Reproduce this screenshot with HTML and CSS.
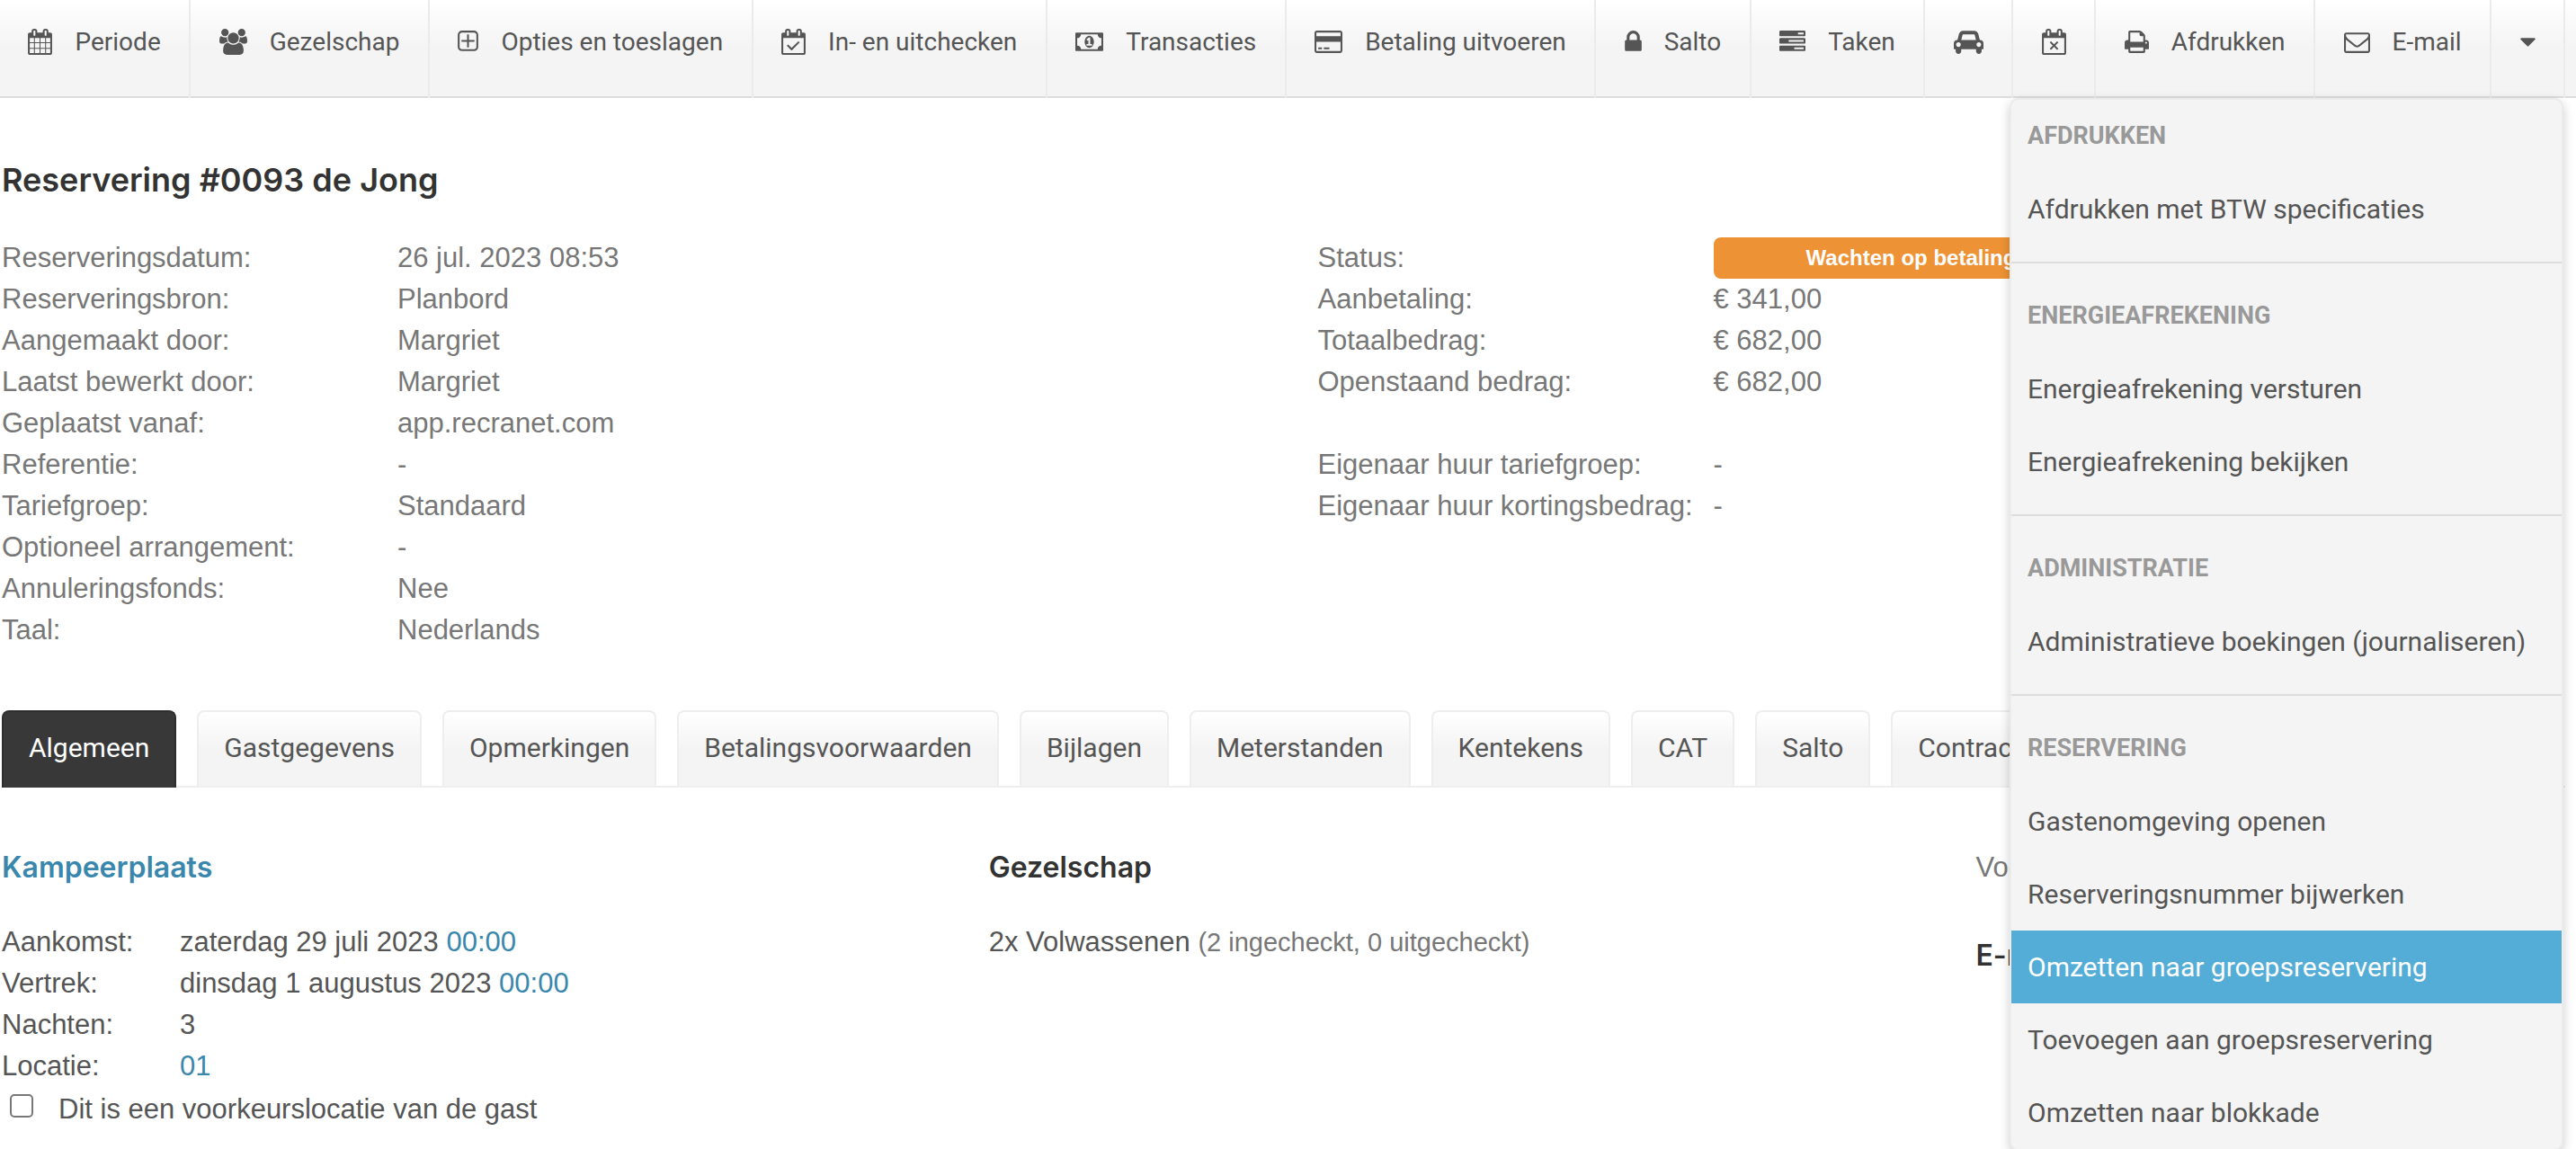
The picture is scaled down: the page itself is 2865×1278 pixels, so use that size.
FILE: index.html
```html
<!DOCTYPE html>
<html lang="nl">
<head>
<meta charset="utf-8">
<meta name="viewport" content="width=device-width, initial-scale=1">
<title>Reservering #0093 de Jong</title>
<link rel="stylesheet" href="styles.css">
</head>
<body>
<div class="page">
  <nav class="toolbar" aria-label="Acties">
    <button class="tool" type="button">
      <svg class="icon icon-calendar" viewBox="64 0 1664 1792" aria-hidden="true"><path d="M192 1664h288v-288h-288v288zm352 0h320v-288h-320v288zm-352-352h288v-320h-288v320zm352 0h320v-320h-320v320zm-352-384h288v-288h-288v288zm736 736h320v-288h-320v288zm-384-736h320v-288h-320v288zm768 736h288v-288h-288v288zm-384-352h320v-320h-320v320zm-352-864v-288q0-13-9.5-22.5t-22.5-9.5h-64q-13 0-22.5 9.5t-9.5 22.5v288q0 13 9.5 22.5t22.5 9.5h64q13 0 22.5-9.5t9.5-22.5zm736 864h288v-320h-288v320zm-384-384h320v-288h-320v288zm384 0h288v-288h-288v288zm32-480v-288q0-13-9.5-22.5t-22.5-9.5h-64q-13 0-22.5 9.5t-9.5 22.5v288q0 13 9.5 22.5t22.5 9.5h64q13 0 22.5-9.5t9.5-22.5zm384-64v1280q0 52-38 90t-90 38h-1408q-52 0-90-38t-38-90v-1280q0-52 38-90t90-38h128v-96q0-66 47-113t113-47h64q66 0 113 47t47 113v96h384v-96q0-66 47-113t113-47h64q66 0 113 47t47 113v96h128q52 0 90 38t38 90z"/></svg>
      <span>Periode</span>
    </button>
    <button class="tool" type="button">
      <svg class="icon icon-wide" viewBox="0 0 1920 1792" aria-hidden="true"><path d="M593 896q-162 5-265 128h-134q-82 0-138-40.5t-56-118.5q0-353 124-353 6 0 43.5 21t97.5 42.5 119 21.5q67 0 133-23-5 37-5 66 0 139 81 256zm1071 637q0 120-73 189.5t-194 69.5h-874q-121 0-194-69.5t-73-189.5q0-53 3.500-103.500t14-109 26.500-108.500 43-97.500 62-81 85.500-53.500 111.500-20q10 0 43 21.500t73 48 107 48 135 21.500 135-21.500 107-48 73-48 43-21.500q61 0 111.500 20t85.500 53.500 62 81 43 97.500 26.500 108.500 14 109 3.500 103.500zm-1024-1277q0 106-75 181t-181 75-181-75-75-181 75-181 181-75 181 75 75 181zm704 384q0 159-112.500 271.500t-271.500 112.500-271.500-112.500-112.500-271.500 112.500-271.500 271.500-112.500 271.500 112.500 112.500 271.500zm576 225q0 78-56 118.500t-138 40.500h-134q-103-123-265-128 81-117 81-256 0-29-5-66 66 23 133 23 59 0 119-21.500t97.500-42.500 43.500-21q124 0 124 353zm-128-609q0 106-75 181t-181 75-181-75-75-181 75-181 181-75 181 75 75 181z"/></svg>
      <span>Gezelschap</span>
    </button>
    <button class="tool" type="button">
      <svg class="icon icon-plus" viewBox="192 0 1408 1792" aria-hidden="true"><path d="M1344 800v64q0 14-9 23t-23 9h-352v352q0 14-9 23t-23 9h-64q-14 0-23-9t-9-23v-352h-352q-14 0-23-9t-9-23v-64q0-14 9-23t23-9h352v-352q0-14 9-23t23-9h64q14 0 23 9t9 23v352h352q14 0 23 9t9 23zm128 448v-832q0-66-47-113t-113-47h-832q-66 0-113 47t-47 113v832q0 66 47 113t113 47h832q66 0 113-47t47-113zm128-832v832q0 119-84.500 203.500t-203.500 84.500h-832q-119 0-203.500-84.500t-84.500-203.500v-832q0-119 84.500-203.500t203.500-84.500h832q119 0 203.500 84.500t84.500 203.500z"/></svg>
      <span>Opties en toeslagen</span>
    </button>
    <button class="tool" type="button">
      <svg class="icon icon-calendar" viewBox="64 0 1664 1792" aria-hidden="true"><path d="M1303 964l-512 512q-10 9-23 9t-23-9l-288-288q-9-10-9-23t9-22l46-46q9-9 22-9t23 9l220 220 444-444q10-9 23-9t22 9l46 46q9 9 9 22t-9 23zm-1111 700h1408v-1024h-1408v1024zm384-1216v-288q0-14-9-23t-23-9h-64q-14 0-23 9t-9 23v288q0 14 9 23t23 9h64q14 0 23-9t9-23zm768 0v-288q0-14-9-23t-23-9h-64q-14 0-23 9t-9 23v288q0 14 9 23t23 9h64q14 0 23-9t9-23zm384-64v1280q0 52-38 90t-90 38h-1408q-52 0-90-38t-38-90v-1280q0-52 38-90t90-38h128v-96q0-66 47-113t113-47h64q66 0 113 47t47 113v96h384v-96q0-66 47-113t113-47h64q66 0 113 47t47 113v96h128q52 0 90 38t38 90z"/></svg>
      <span>In- en uitchecken</span>
    </button>
    <button class="tool" type="button">
      <svg class="icon icon-wide" viewBox="0 0 1920 1792" aria-hidden="true"><path d="M768 1152h384v-96h-128v-448h-114l-148 137 77 80q42-37 55-57h2v288h-128v96zm512-256q0 70-21 142t-59.500 134-101.500 101-138 39-138-39-101.500-101-59.500-134-21-142 21-142 59.500-134 101.500-101 138-39 138 39 101.500 101 59.500 134 21 142zm512 256v-512q-106 0-181-75t-75-181h-1152q0 106-75 181t-181 75v512q106 0 181 75t75 181h1152q0-106 75-181t181-75zm128-832v1152q0 26-19 45t-45 19h-1792q-26 0-45-19t-19-45v-1152q0-26 19-45t45-19h1792q26 0 45 19t19 45z"/></svg>
      <span>Transacties</span>
    </button>
    <button class="tool" type="button">
      <svg class="icon icon-wide" viewBox="0 0 1920 1792" aria-hidden="true"><path d="M1760 128q66 0 113 47t47 113v1216q0 66-47 113t-113 47h-1600q-66 0-113-47t-47-113v-1216q0-66 47-113t113-47h1600zm-1600 128q-13 0-22.500 9.500t-9.500 22.500v224h1664v-224q0-13-9.500-22.500t-22.500-9.500h-1600zm1600 1280q13 0 22.500-9.500t9.500-22.500v-608h-1664v608q0 13 9.500 22.500t22.500 9.500h1600zm-1504-128v-128h256v128h-256zm384 0v-128h384v128h-384z"/></svg>
      <span>Betaling uitvoeren</span>
    </button>
    <button class="tool" type="button">
      <svg class="icon icon-lock" viewBox="320 0 1152 1792" aria-hidden="true"><path d="M640 768h512v-192q0-106-75-181t-181-75-181 75-75 181v192zm832 96v576q0 40-28 68t-68 28h-960q-40 0-68-28t-28-68v-576q0-40 28-68t68-28h32v-192q0-184 132-316t316-132 316 132 132 316v192h32q40 0 68 28t28 68z"/></svg>
      <span>Salto</span>
    </button>
    <button class="tool" type="button">
      <svg class="icon icon-tasks" viewBox="0 0 1792 1792" aria-hidden="true"><path d="M1024 1408h640v-128h-640v128zm-384-512h1024v-128h-1024v128zm640-512h384v-128h-384v128zm512 832v256q0 26-19 45t-45 19h-1664q-26 0-45-19t-19-45v-256q0-26 19-45t45-19h1664q26 0 45 19t19 45zm0-512v256q0 26-19 45t-45 19h-1664q-26 0-45-19t-19-45v-256q0-26 19-45t45-19h1664q26 0 45 19t19 45zm0-512v256q0 26-19 45t-45 19h-1664q-26 0-45-19t-19-45v-256q0-26 19-45t45-19h1664q26 0 45 19t19 45z"/></svg>
      <span>Taken</span>
    </button>
    <button class="tool" type="button" aria-label="Kenteken">
      <svg class="icon icon-car" viewBox="0 0 2048 1792" aria-hidden="true"><path d="M480 1088q0-66-47-113t-113-47-113 47-47 113 47 113 113 47 113-47 47-113zm36-320h1016l-89-357q-2-8-14-17.500t-21-9.500h-768q-9 0-21 9.500t-14 17.500zm1372 320q0-66-47-113t-113-47-113 47-47 113 47 113 113 47 113-47 47-113zm160-96v384q0 14-9 23t-23 9h-96v128q0 80-56 136t-136 56-136-56-56-136v-128h-1024v128q0 80-56 136t-136 56-136-56-56-136v-128h-96q-14 0-23-9t-9-23v-384q0-93 65.500-158.500t158.500-65.500h28l105-419q23-94 104-157.500t179-63.500h768q98 0 179 63.500t104 157.500l105 419h28q93 0 158.500 65.500t65.500 158.500z"/></svg>
    </button>
    <button class="tool" type="button" aria-label="Annuleren">
      <svg class="icon icon-calendar" viewBox="64 0 1664 1792" aria-hidden="true"><path d="M1175 1385l-46 46q-9 9-22 9t-23-9l-188-189-188 189q-10 9-23 9t-22-9l-46-46q-9-9-9-22t9-23l189-188-189-188q-9-10-9-23t9-22l46-46q9-9 22-9t23 9l188 188 188-188q10-9 23-9t22 9l46 46q9 9 9 22t-9 23l-188 188 188 188q9 10 9 23t-9 22zm-983 279h1408v-1024h-1408v1024zm384-1216v-288q0-14-9-23t-23-9h-64q-14 0-23 9t-9 23v288q0 14 9 23t23 9h64q14 0 23-9t9-23zm768 0v-288q0-14-9-23t-23-9h-64q-14 0-23 9t-9 23v288q0 14 9 23t23 9h64q14 0 23-9t9-23zm384-64v1280q0 52-38 90t-90 38h-1408q-52 0-90-38t-38-90v-1280q0-52 38-90t90-38h128v-96q0-66 47-113t113-47h64q66 0 113 47t47 113v96h384v-96q0-66 47-113t113-47h64q66 0 113 47t47 113v96h128q52 0 90 38t38 90z"/></svg>
    </button>
    <button class="tool" type="button">
      <svg class="icon icon-calendar" viewBox="64 0 1664 1792" aria-hidden="true"><path d="M448 1536h896v-256h-896v256zm0-640h896v-384h-160q-40 0-68-28t-28-68v-160h-640v640zm1152 64q0-26-19-45t-45-19-45 19-19 45 19 45 45 19 45-19 19-45zm128 0v416q0 13-9.500 22.500t-22.500 9.500h-224v160q0 40-28 68t-68 28h-960q-40 0-68-28t-28-68v-160h-224q-13 0-22.500-9.500t-9.500-22.500v-416q0-79 56.500-135.500t135.500-56.500h64v-544q0-40 28-68t68-28h672q40 0 88 20t76 48l152 152q28 28 48 76t20 88v256h64q79 0 135.500 56.500t56.500 135.500z"/></svg>
      <span>Afdrukken</span>
    </button>
    <button class="tool" type="button">
      <svg class="icon icon-tasks" viewBox="0 0 1792 1792" aria-hidden="true"><path d="M1664 1504v-768q-32 36-69 66-268 206-426 338-51 43-83 67t-86.500 48.500-102.500 24.500h-2q-48 0-102.500-24.500t-86.500-48.500-83-67q-158-132-426-338-37-30-69-66v768q0 13 9.500 22.500t22.500 9.500h1472q13 0 22.500-9.500t9.500-22.500zm0-1051v-24.500l-.5-13-3-12.500-5.500-9-9-7.500-14-2.500h-1472q-13 0-22.500 9.500t-9.500 22.500q0 168 147 284 193 152 401 317 6 5 35 29.500t46 37.500 44.500 31.500 50.500 27.500 43 9h2q20 0 43-9t50.500-27.500 44.500-31.500 46-37.500 35-29.500q208-165 401-317 54-43 100.500-115.500t46.500-131.500zm128-37v1088q0 66-47 113t-113 47h-1472q-66 0-113-47t-47-113v-1088q0-66 47-113t113-47h1472q66 0 113 47t47 113z"/></svg>
      <span>E-mail</span>
    </button>
    <button class="tool" type="button" aria-label="Meer acties" aria-expanded="true">
      <svg class="icon icon-caret" viewBox="384 0 1024 1792" aria-hidden="true"><path d="M1408 704q0 26-19 45l-448 448q-19 19-45 19t-45-19l-448-448q-19-19-19-45t19-45 45-19h896q26 0 45 19t19 45z"/></svg>
    </button>

    <div class="menu">
      <section class="menu-group">
        <h2 class="menu-title">AFDRUKKEN</h2>
        <a class="menu-item" href="#">Afdrukken met BTW specificaties</a>
      </section>
      <section class="menu-group">
        <h2 class="menu-title">ENERGIEAFREKENING</h2>
        <a class="menu-item" href="#">Energieafrekening versturen</a>
        <a class="menu-item" href="#">Energieafrekening bekijken</a>
      </section>
      <section class="menu-group">
        <h2 class="menu-title">ADMINISTRATIE</h2>
        <a class="menu-item" href="#">Administratieve boekingen (journaliseren)</a>
      </section>
      <section class="menu-group">
        <h2 class="menu-title">RESERVERING</h2>
        <a class="menu-item" href="#">Gastenomgeving openen</a>
        <a class="menu-item" href="#">Reserveringsnummer bijwerken</a>
        <a class="menu-item menu-item-active" href="#">Omzetten naar groepsreservering</a>
        <a class="menu-item" href="#">Toevoegen aan groepsreservering</a>
        <a class="menu-item" href="#">Omzetten naar blokkade</a>
      </section>
    </div>
  </nav>

  <main class="content">
    <h1 class="title">Reservering #0093 de Jong</h1>

    <div class="summary">
      <dl class="facts">
        <dt>Reserveringsdatum:</dt><dd>26 jul. 2023 08:53</dd>
        <dt>Reserveringsbron:</dt><dd>Planbord</dd>
        <dt>Aangemaakt door:</dt><dd>Margriet</dd>
        <dt>Laatst bewerkt door:</dt><dd>Margriet</dd>
        <dt>Geplaatst vanaf:</dt><dd>app.recranet.com</dd>
        <dt>Referentie:</dt><dd>-</dd>
        <dt>Tariefgroep:</dt><dd>Standaard</dd>
        <dt>Optioneel arrangement:</dt><dd>-</dd>
        <dt>Annuleringsfonds:</dt><dd>Nee</dd>
        <dt>Taal:</dt><dd>Nederlands</dd>
      </dl>
      <div>
        <dl class="facts">
          <dt>Status:</dt><dd><span class="badge">Wachten op betaling</span></dd>
          <dt>Aanbetaling:</dt><dd>€ 341,00</dd>
          <dt>Totaalbedrag:</dt><dd>€ 682,00</dd>
          <dt>Openstaand bedrag:</dt><dd>€ 682,00</dd>
        </dl>
        <dl class="facts facts-owner">
          <dt>Eigenaar huur tariefgroep:</dt><dd>-</dd>
          <dt>Eigenaar huur kortingsbedrag:</dt><dd>-</dd>
        </dl>
      </div>
    </div>

    <div class="tabs">
      <a class="tab tab-active" href="#">Algemeen</a>
      <a class="tab" href="#">Gastgegevens</a>
      <a class="tab" href="#">Opmerkingen</a>
      <a class="tab" href="#">Betalingsvoorwaarden</a>
      <a class="tab" href="#">Bijlagen</a>
      <a class="tab" href="#">Meterstanden</a>
      <a class="tab" href="#">Kentekens</a>
      <a class="tab" href="#">CAT</a>
      <a class="tab" href="#">Salto</a>
      <a class="tab" href="#">Contract</a>
    </div>

    <div class="details">
      <section>
        <h2 class="heading"><a href="#">Kampeerplaats</a></h2>
        <dl class="stay">
          <dt>Aankomst:</dt><dd>zaterdag 29 juli 2023 <a href="#">00:00</a></dd>
          <dt>Vertrek:</dt><dd>dinsdag 1 augustus 2023 <a href="#">00:00</a></dd>
          <dt>Nachten:</dt><dd>3</dd>
          <dt>Locatie:</dt><dd><a href="#">01</a></dd>
        </dl>
        <label class="check"><input type="checkbox"><span>Dit is een voorkeurslocatie van de gast</span></label>
      </section>
      <section>
        <h2 class="heading">Gezelschap</h2>
        <p class="party">2x Volwassenen <small>(2 ingecheckt, 0 uitgecheckt)</small></p>
      </section>
      <section>
        <p class="note">Voeg toe</p>
        <h2 class="heading">E-mail</h2>
      </section>
    </div>
  </main>
</div>
</body>
</html>
```
FILE: styles.css
```css
* {
  box-sizing: border-box;
}

body {
  margin: 0;
  background: #fff;
  color: #555;
  font: 31px/46px "Liberation Sans", Arial, sans-serif;
}

h1, h2, p, dl, dd {
  margin: 0;
}

a {
  color: #3a87ad;
  text-decoration: none;
}

.page {
  min-height: 100vh;
  overflow: clip;
}

/* Toolbar */

.toolbar {
  position: relative;
  display: flex;
  height: 109px;
  padding-right: 12px;
  background: linear-gradient(#fff, #f4f4f4 50%) padding-box;
  border-bottom: 2px solid #ddd;
}

.tool {
  display: flex;
  flex: 1 1 auto;
  align-items: center;
  justify-content: center;
  gap: 25px;
  margin: 0 0 -2px;
  padding: 0 30px 15px;
  border: 0;
  border-right: 2px solid #ebebeb;
  background: none;
  color: #555;
  font: 28px/36px Roboto, sans-serif;
  white-space: nowrap;
}

.icon {
  flex: none;
  height: 29px;
  margin-bottom: 2px;
  fill: currentColor;
}

.icon-calendar { width: 27px; }
.icon-wide { width: 31px; }
.icon-plus { width: 23px; }
.icon-lock { width: 19px; }
.icon-tasks { width: 29px; }
.icon-car { width: 33px; }
.icon-caret { width: 17px; }

/* Drop-down menu */

.menu {
  position: absolute;
  top: 109px;
  right: 14px;
  z-index: 1;
  width: 616px;
  border: 2px solid #ebebeb;
  border-radius: 10px;
  background: #f4f4f4;
  box-shadow: 0 4px 12px rgba(0, 0, 0, 0.2);
}

.menu-group + .menu-group {
  margin-top: 18px;
  padding-top: 18px;
  border-top: 2px solid #ddd;
}

.menu-title,
.menu-item {
  display: block;
  padding: 0 18px;
  color: #555;
  font: 30px/81px Roboto, sans-serif;
  white-space: nowrap;
}

.menu-title {
  color: #999;
  font-size: 27px;
  font-weight: 700;
}

.menu-item-active {
  background: #53add7;
  color: #fff;
}

/* Reservation */

.content {
  padding: 67px 12px 10px 2px;
}

.title,
.heading {
  color: #333;
  font: 600 32px/48px Inter, sans-serif;
}

.title {
  font-size: 36px;
}

.summary {
  display: grid;
  grid-template-columns: 1fr 1fr;
  gap: 76px;
  margin-top: 40px;
  color: #777;
}

.facts {
  display: grid;
  grid-template-columns: 440px 440px;
  grid-auto-rows: 46px;
  align-content: start;
  white-space: nowrap;
}

.facts-owner {
  margin-top: 46px;
}

.badge {
  display: block;
  border-radius: 8px;
  background: #ed9235;
  color: #fff;
  font-size: 24px;
  font-weight: 700;
  text-align: center;
}

/* Tabs */

.tabs {
  display: flex;
  gap: 23px;
  height: 86px;
  margin-top: 66px;
  border-bottom: 2px solid #eee;
}

.tab {
  height: 84px;
  padding: 0 28px;
  border: 2px solid #eee;
  border-bottom: 0;
  border-radius: 8px 8px 0 0;
  background: linear-gradient(#fff, #f4f4f4 50%);
  color: #555;
  font: 30px/79px Roboto, sans-serif;
  white-space: nowrap;
}

.tab-active {
  height: 86px;
  border-color: #2e2e2e;
  background: #383838;
  color: #fff;
}

/* Details */

.details {
  display: grid;
  grid-template-columns: 14fr 14fr 9fr;
  gap: 78px;
  padding-top: 65px;
}

.stay {
  display: grid;
  grid-template-columns: 198px 1fr;
  grid-auto-rows: 46px;
  margin-top: 36px;
}

.party {
  margin-top: 36px;
}

.party small {
  color: #777;
  font-size: 29px;
}

.check {
  display: flex;
  align-items: center;
  margin-top: 2px;
}

.check input {
  width: 26px;
  height: 26px;
  margin: 0 28px 8px 9px;
  appearance: none;
  border: 2px solid #777;
  border-radius: 5px;
  background: #fff;
}

.note {
  margin-bottom: 50px;
  color: #777;
  line-height: 48px;
}
```
